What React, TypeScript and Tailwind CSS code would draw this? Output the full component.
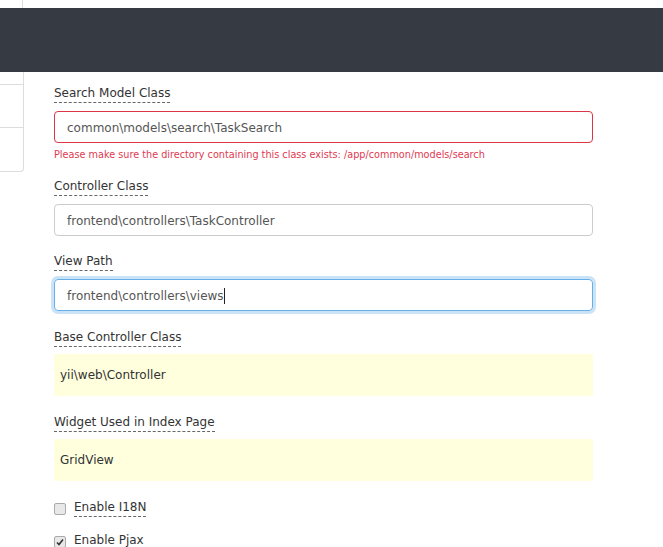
import React from "react";

const font = { fontFamily: '"DejaVu Sans", Verdana, sans-serif' };

function Label({ children }: { children: React.ReactNode }) {
  return (
    <div className="h-[20px] flex items-start">
      <span className="text-[12px] leading-[17px] text-[#333] border-b border-dashed border-[#666]">
        {children}
      </span>
    </div>
  );
}

export default function App() {
  return (
    <div className="w-[663px] h-[547px] bg-white overflow-hidden relative" style={font}>
      <div className="h-[8px] flex">
        <div className="w-[23px] border-r border-[#ddd]" />
      </div>
      <div className="h-[64px] bg-[#363a42]" />
      <div className="flex">
        <div className="w-[24px] shrink-0">
          <div className="h-[100px] border-r border-b border-[#ddd] rounded-br-[4px] flex flex-col">
            <div className="h-[13px] border-b border-[#ddd]" />
            <div className="h-[43px] border-b border-[#ddd]" />
          </div>
        </div>
        <div className="ml-[30px] w-[539px] pt-[13px] flex flex-col">
          <Label>Search Model Class</Label>
          <div className="mt-[6px] h-[32px] border border-[#dc3545] rounded-[4px] flex items-center px-[12px] pt-[1px] text-[12px] text-[#555]">
            common\models\search\TaskSearch
          </div>
          <div className="mt-[6px] text-[9.7px] leading-[12px] text-[#e03a52]">
            Please make sure the directory containing this class exists: /app/common/models/search
          </div>
          <div className="mt-[17px]">
            <Label>Controller Class</Label>
          </div>
          <div className="mt-[6px] h-[32px] border border-[#ccc] rounded-[4px] flex items-center px-[12px] pt-[1px] text-[12px] text-[#555]">
            frontend\controllers\TaskController
          </div>
          <div className="mt-[17px]">
            <Label>View Path</Label>
          </div>
          <div className="mt-[6px] h-[32px] border border-[#66afe9] rounded-[4px] flex items-center px-[12px] pt-[1px] text-[12px] text-[#555] shadow-[0_0_0_3px_rgba(102,175,233,0.35)]">
            frontend\controllers\views<span className="inline-block w-px h-[16px] bg-[#222]" />
          </div>
          <div className="mt-[18px]">
            <Label>Base Controller Class</Label>
          </div>
          <div className="mt-[5px] h-[42px] bg-[#ffffde] flex items-center px-[6px] text-[12px] text-[#333]">
            yii\web\Controller
          </div>
          <div className="mt-[18px]">
            <Label>Widget Used in Index Page</Label>
          </div>
          <div className="mt-[5px] h-[42px] bg-[#ffffde] flex items-center px-[6px] text-[12px] text-[#333]">
            GridView
          </div>
          <div className="mt-[18px] flex items-start">
            <span className="mt-[4px] w-[12px] h-[12px] border border-[#aaa] rounded-[2px] bg-[#e8e8e8]" />
            <span className="ml-[8px]">
              <Label>Enable I18N</Label>
            </span>
          </div>
          <div className="mt-[13px] flex items-start">
            <span className="mt-[4px] w-[12px] h-[12px] border border-[#aaa] rounded-[2px] bg-[#e8e8e8] flex items-center justify-center">
              <svg width="10" height="10" viewBox="0 0 10 10">
                <path d="M2 5.5 L4 7.5 L8 2.5" stroke="#333" strokeWidth="1.6" fill="none" />
              </svg>
            </span>
            <span className="ml-[8px]">
              <Label>Enable Pjax</Label>
            </span>
          </div>
        </div>
      </div>
    </div>
  );
}
